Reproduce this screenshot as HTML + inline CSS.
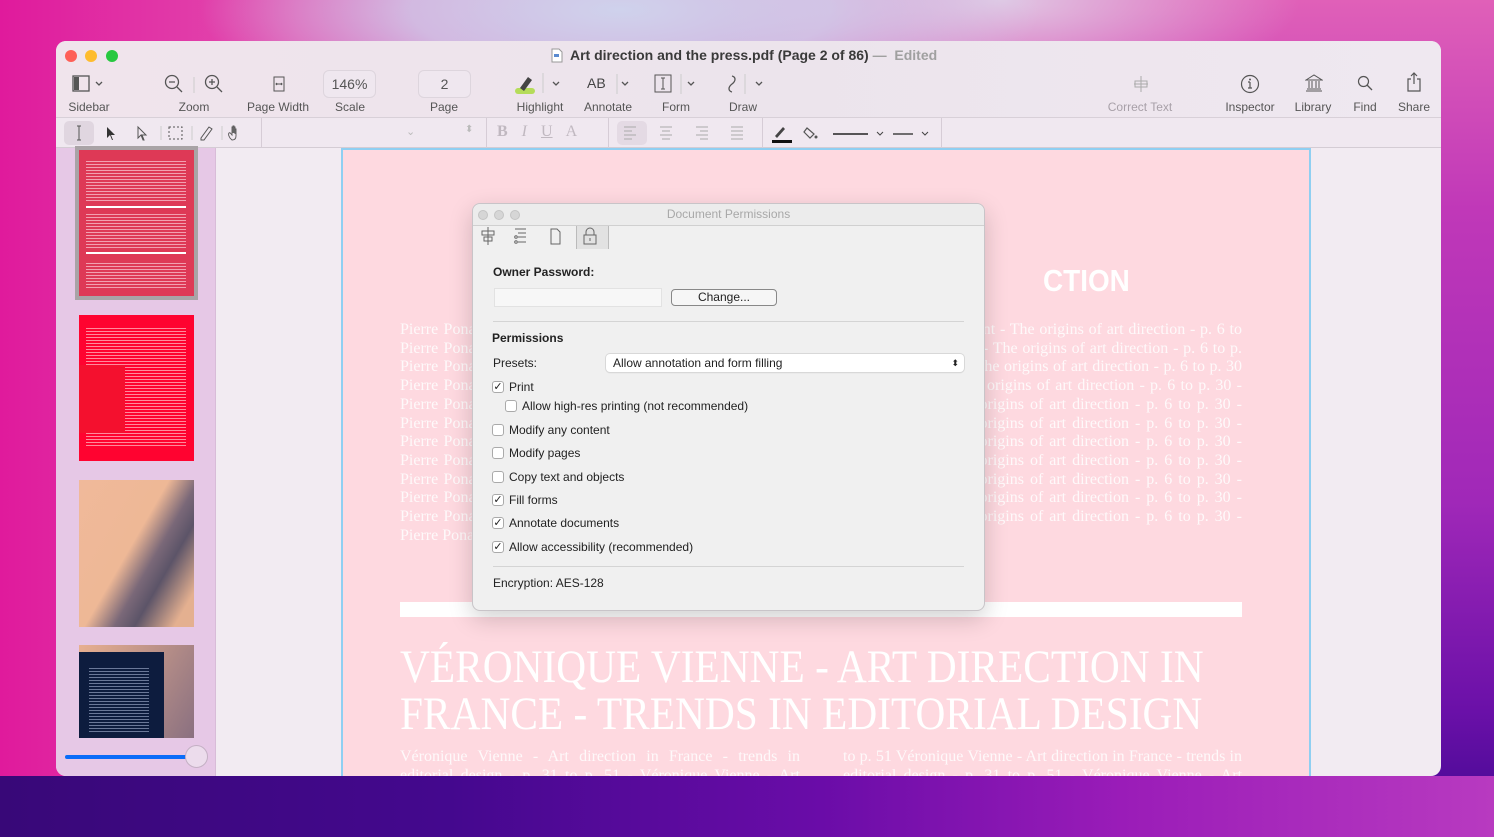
<!DOCTYPE html>
<html><head><meta charset="utf-8"><style>
*{margin:0;padding:0;box-sizing:border-box}
body{width:1494px;height:837px;overflow:hidden;position:relative;font-family:"Liberation Sans",sans-serif;
background:
radial-gradient(ellipse 420px 120px at 620px 10px,#cfd2ec 0%,rgba(207,210,236,.8) 50%,rgba(207,210,236,0) 100%),
radial-gradient(ellipse 300px 100px at 1000px 0px,#e0c8e4 0%,rgba(224,200,228,0) 100%),
linear-gradient(90deg,#e01a9c 0%,#e24eb0 20%,rgba(0,0,0,0) 35%),
linear-gradient(180deg,#e060b8 0%,#c038b8 25%,#a028b8 60%,#6a10a8 85%,#400890 100%);}
.bgbot{position:absolute;left:0;top:776px;width:1494px;height:61px;background:linear-gradient(90deg,#380878 0%,#44088e 30%,#6a0ca8 55%,#9a1cb8 75%,#b83ac0 100%)}
.win{position:absolute;left:56px;top:41px;width:1385px;height:735px;border-radius:10px;overflow:hidden;background:#f2ebf2}
.tb{position:absolute;left:0;top:0;width:1385px;height:77px;background:linear-gradient(90deg,#f0e4ec,#ece4ec 50%,#efe8f0);border-bottom:1px solid #d8d0d8}
.fb{position:absolute;left:0;top:77px;width:1385px;height:30px;background:#f0e8f0;border-bottom:1px solid #d4ccd4}
.dot{position:absolute;top:9px;width:12px;height:12px;border-radius:50%}
.title{position:absolute;top:6px;font-size:14px;font-weight:bold;color:#3a3a3a;white-space:nowrap}
.title span{color:#a0a0a0;font-weight:bold}
.lbl{position:absolute;top:59px;font-size:12px;color:#555;white-space:nowrap;transform:translateX(-50%)}
.ico{position:absolute}
.box{position:absolute;top:29px;height:28px;border:1px solid #ddd5dd;border-radius:6px;background:#efe7ef;font-size:14px;color:#555;text-align:center;line-height:26px}
.side{position:absolute;left:0;top:107px;width:160px;height:628px;background:#e6c8e6;border-right:1px solid #d8bcd8}
.page{position:absolute;left:285px;top:107px;width:970px;height:640px;background:#fed9e0;border:2px solid #8fcff2;overflow:hidden}
.ptxt{position:absolute;color:#fff;font-family:"Liberation Serif",serif;font-size:16px;line-height:18.7px;text-align:justify;opacity:.85;overflow:hidden}
.big{position:absolute;left:57px;color:#fff;font-family:"Liberation Serif",serif;font-size:47px;white-space:nowrap;transform-origin:left top;transform:scaleX(.88)}
.dlg{position:absolute;left:472px;top:203px;width:513px;height:408px;background:#f0f0f0;border:1px solid #c8c4c8;border-radius:8px;box-shadow:0 8px 24px rgba(0,0,0,.18);font-size:12px;color:#222}
.dlg .t{height:22px;border-bottom:1px solid #d0d0d0;background:#ececec;border-radius:8px 8px 0 0;text-align:center;line-height:21px;color:#a8a8a8;font-size:12px}
.dd{position:absolute;top:6px;width:10px;height:10px;border-radius:50%;background:#d6d6d6;border:1px solid #c4c4c4}
.cb{position:absolute;width:12px;height:12px;border:1px solid #aaa;border-radius:3px;background:#fff;font-size:11px;line-height:10px;text-align:center;color:#222}
.cl{position:absolute;font-size:12px;color:#222;white-space:nowrap}
</style></head><body>
<div class="bgbot"></div>
<div class="win">
 <div class="tb">
  <div class="dot" style="left:9px;background:#fe5f57"></div>
  <div class="dot" style="left:29px;background:#febc2e"></div>
  <div class="dot" style="left:50px;background:#28c840"></div>
  <svg class="ico" style="left:495px;top:7px" width="12" height="15"><path d="M1 1h7l3 3v10H1z" fill="#fff" stroke="#999"/><rect x="3" y="6" width="5" height="3" fill="#5a8ad0"/></svg>
  <div class="title" style="left:514px">Art direction and the press.pdf (Page 2 of 86) <span>—&nbsp; Edited</span></div>
  <svg class="ico" style="left:16px;top:34px" width="36" height="18"><rect x="1" y="1" width="16" height="15" fill="none" stroke="#555" stroke-width="1.3"/><rect x="2" y="2" width="5" height="13" fill="#555"/><path d="M24 7l3 3 3-3" fill="none" stroke="#555" stroke-width="1.3"/></svg>
  <div class="lbl" style="left:33px">Sidebar</div>
  <svg class="ico" style="left:108px;top:33px" width="70" height="22"><circle cx="8" cy="8" r="6.5" fill="none" stroke="#555" stroke-width="1.3"/><path d="M5 8h6M13 13l5 5" stroke="#555" stroke-width="1.3"/><path d="M30 3v16" stroke="#ccc"/><circle cx="48" cy="8" r="6.5" fill="none" stroke="#555" stroke-width="1.3"/><path d="M45 8h6M48 5v6M53 13l5 5" stroke="#555" stroke-width="1.3"/></svg>
  <div class="lbl" style="left:138px">Zoom</div>
  <svg class="ico" style="left:217px;top:35px" width="12" height="16"><rect x="1" y="1" width="10" height="14" fill="none" stroke="#555"/><path d="M3 8h6M4 7l-1 1 1 1M8 7l1 1-1 1" stroke="#555" fill="none"/></svg>
  <div class="lbl" style="left:222px">Page Width</div>
  <div class="box" style="left:267px;width:53px">146%</div>
  <div class="lbl" style="left:294px">Scale</div>
  <div class="box" style="left:362px;width:53px">2</div>
  <div class="lbl" style="left:388px">Page</div>
  <svg class="ico" style="left:459px;top:32px" width="52" height="22"><rect x="0" y="15" width="20" height="6" rx="3" fill="#b5dc5a"/><path d="M5 15l8-11 4 3-8 11z" fill="#444"/><path d="M28 0v20" stroke="#ccc"/><path d="M38 9l3 3 3-3" fill="none" stroke="#555" stroke-width="1.3"/></svg>
  <div class="lbl" style="left:484px">Highlight</div>
  <div class="ico" style="left:531px;top:34px;font-size:14px;color:#444">AB</div>
  <svg class="ico" style="left:560px;top:33px" width="20" height="20"><path d="M1 0v20" stroke="#ccc"/><path d="M6 8l3 3 3-3" fill="none" stroke="#555" stroke-width="1.3"/></svg>
  <div class="lbl" style="left:552px">Annotate</div>
  <svg class="ico" style="left:598px;top:33px" width="45" height="20"><rect x="1" y="1" width="16" height="17" fill="none" stroke="#555"/><path d="M9 4v11M7 4h4M7 15h4" stroke="#555"/><path d="M27 0v20" stroke="#ccc"/><path d="M34 8l3 3 3-3" fill="none" stroke="#555" stroke-width="1.3"/></svg>
  <div class="lbl" style="left:620px">Form</div>
  <svg class="ico" style="left:666px;top:33px" width="45" height="20"><path d="M10 2c4 1 4 5 0 8s-4 7 0 8" fill="none" stroke="#555" stroke-width="1.3"/><path d="M23 0v20" stroke="#ccc"/><path d="M34 8l3 3 3-3" fill="none" stroke="#555" stroke-width="1.3"/></svg>
  <div class="lbl" style="left:687px">Draw</div>
  <svg class="ico" style="left:1075px;top:35px" width="20" height="16"><path d="M10 0v16M3 8h14" stroke="#aaa"/><rect x="4" y="5" width="12" height="6" fill="none" stroke="#aaa"/></svg>
  <div class="lbl" style="left:1084px;color:#a8a0a8">Correct Text</div>
  <svg class="ico" style="left:1184px;top:33px" width="20" height="20"><circle cx="10" cy="10" r="8.5" fill="none" stroke="#555" stroke-width="1.2"/><path d="M10 8v6M8 14h4M8 8h2" stroke="#555" stroke-width="1.2"/><circle cx="10" cy="5.5" r="1" fill="#555"/></svg>
  <div class="lbl" style="left:1194px">Inspector</div>
  <svg class="ico" style="left:1249px;top:33px" width="18" height="18"><path d="M1 6l8-5 8 5zM1 17h16M2 15h14" fill="none" stroke="#555"/><path d="M4 7v7M7 7v7M11 7v7M14 7v7" stroke="#555"/></svg>
  <div class="lbl" style="left:1257px">Library</div>
  <svg class="ico" style="left:1301px;top:34px" width="16" height="16"><circle cx="6.5" cy="6.5" r="5" fill="none" stroke="#555" stroke-width="1.2"/><path d="M10 10l5 5" stroke="#555" stroke-width="1.3"/></svg>
  <div class="lbl" style="left:1309px">Find</div>
  <svg class="ico" style="left:1351px;top:31px" width="14" height="20"><path d="M4 7H1v12h12V7h-3M7 1v11M4 4l3-3 3 3" fill="none" stroke="#555" stroke-width="1.2"/></svg>
  <div class="lbl" style="left:1358px">Share</div>
 </div>
 <div class="fb">
  <div style="position:absolute;left:8px;top:3px;width:30px;height:24px;background:#e0d6e0;border-radius:5px"></div>
  <svg class="ico" style="left:8px;top:5px" width="200" height="20"><path d="M15 3v14M13 3h4M13 17h4" stroke="#555"/><path d="M43 4l8 8-4 0 2 5-1 0-2-5-3 3z" fill="#333"/><path d="M74 4l8 8-4 0 2 5-1 0-2-5-3 3z" fill="none" stroke="#555"/><path d="M97 3v14" stroke="#ccc"/><rect x="105" y="4" width="13" height="12" fill="none" stroke="#555" stroke-dasharray="2 2"/><path d="M128 3v14" stroke="#ccc"/><path d="M137 15l8-11 3 2-8 11-3 0z" fill="none" stroke="#555"/><path d="M158 3v14" stroke="#ccc"/><path d="M168 17c-3-2-4-6-3-7s2 1 3 2V4h1v6V3h1v7V4h1v7V6h1v7c0 3-2 4-4 4z" fill="none" stroke="#555" stroke-width=".9"/></svg>
  <div style="position:absolute;left:205px;top:0;width:1px;height:30px;background:#d6ccd6"></div>
  <div style="position:absolute;left:350px;top:7px;color:#bbb;font-size:11px">⌄</div>
  <div style="position:absolute;left:409px;top:6px;color:#bbb;font-size:10px">⬍</div>
  <div style="position:absolute;left:430px;top:0;width:1px;height:30px;background:#d6ccd6"></div>
  <div style="position:absolute;left:441px;top:5px;font-family:'Liberation Serif',serif;font-size:16px;color:#c0b8c0;white-space:nowrap;word-spacing:10px"><b>B</b> <i>I</i> <u>U</u> A</div>
  <div style="position:absolute;left:552px;top:0;width:1px;height:30px;background:#d6ccd6"></div>
  <div style="position:absolute;left:561px;top:3px;width:30px;height:24px;background:#e4dae4;border-radius:5px"></div>
  <svg class="ico" style="left:568px;top:8px" width="120" height="14"><g stroke="#aaa"><path d="M0 1h12M0 5h8M0 9h12M0 13h8"/><path d="M36 1h12M38 5h8M36 9h12M38 13h8"/><path d="M72 1h12M76 5h8M72 9h12M76 13h8"/><path d="M107 1h12M107 5h12M107 9h12M107 13h12"/></g></svg>
  <div style="position:absolute;left:706px;top:0;width:1px;height:30px;background:#d6ccd6"></div>
  <svg class="ico" style="left:715px;top:5px" width="160" height="22"><path d="M4 13l8-9 2 2-8 9z" fill="#444"/><rect x="1" y="17" width="20" height="3" fill="#111"/><path d="M36 5l7 6-4 4-6-6z" fill="none" stroke="#555" stroke-width="1.2"/><circle cx="45" cy="14" r="1.5" fill="#555"/><path d="M62 11h35" stroke="#222" stroke-width="1.5"/><path d="M106 9l3 3 3-3" fill="none" stroke="#444"/><path d="M122 11h20" stroke="#444" stroke-width="1.5"/><path d="M151 9l3 3 3-3" fill="none" stroke="#444"/></svg>
  <div style="position:absolute;left:885px;top:0;width:1px;height:30px;background:#d6ccd6"></div>
 </div>
 <div class="side">
  <div style="position:absolute;left:19px;top:-2px;width:123px;height:154px;background:#a9a3a6"></div>
  <div style="position:absolute;left:23px;top:2px;width:115px;height:146px;background:#de3956"></div>
  <div style="position:absolute;left:30px;top:13px;width:100px;height:42px;background:repeating-linear-gradient(180deg,#f2a0b0 0 1px,transparent 1px 3px)"></div>
  <div style="position:absolute;left:30px;top:58px;width:100px;height:2px;background:#fff"></div>
  <div style="position:absolute;left:30px;top:66px;width:100px;height:36px;background:repeating-linear-gradient(180deg,#f2a0b0 0 1px,transparent 1px 3px)"></div>
  <div style="position:absolute;left:30px;top:104px;width:100px;height:2px;background:#fff"></div>
  <div style="position:absolute;left:30px;top:115px;width:100px;height:26px;background:repeating-linear-gradient(180deg,#f2a0b0 0 1px,transparent 1px 3px)"></div>
  <div style="position:absolute;left:23px;top:167px;width:115px;height:146px;background:#ff0330"></div>
  <div style="position:absolute;left:30px;top:180px;width:100px;height:120px;background:repeating-linear-gradient(180deg,#ff8a9c 0 1px,transparent 1px 3px)"></div>
  <div style="position:absolute;left:23px;top:217px;width:46px;height:68px;background:#f4102e"></div>
  <div style="position:absolute;left:23px;top:332px;width:115px;height:147px;background:linear-gradient(120deg,#f0b99a 0%,#eeb896 45%,#7a6878 60%,#5c5468 70%,#e4b090 90%)"></div>
  <div style="position:absolute;left:23px;top:497px;width:115px;height:93px;background:linear-gradient(120deg,#e8b090,#8a7080)"></div>
  <div style="position:absolute;left:23px;top:504px;width:85px;height:86px;background:#0d1c3e"></div>
  <div style="position:absolute;left:33px;top:520px;width:60px;height:65px;background:repeating-linear-gradient(180deg,#6a7898 0 1px,transparent 1px 3px)"></div>
  <div style="position:absolute;left:9px;top:607px;width:124px;height:4px;background:#0a6cf8;border-radius:2px"></div>
  <div style="position:absolute;left:129px;top:597px;width:23px;height:23px;border-radius:50%;background:#ecdcec;border:1px solid #c4b0c4"></div>
 </div>
 <div class="page">
  <div style="position:absolute;left:700px;top:113px;color:#fff;font-size:31px;font-weight:bold;transform:scaleX(.9);transform-origin:left">CTION</div>
  <div class="ptxt" style="left:57px;top:171px;width:390px;height:262px">Pierre Ponant - The origins of art direction - p. 6 to p. 30 - Pierre Ponant - The origins of art direction - p. 6 to p. 30 - Pierre Ponant - The origins of art direction - p. 6 to p. 30 - Pierre Ponant - The origins of art direction - p. 6 to p. 30 - Pierre Ponant - The origins of art direction - p. 6 to p. 30 - Pierre Ponant - The origins of art direction - p. 6 to p. 30 - Pierre Ponant - The origins of art direction - p. 6 to p. 30 - Pierre Ponant - The origins of art direction - p. 6 to p. 30 - Pierre Ponant - The origins of art direction - p. 6 to p. 30 - Pierre Ponant - The origins of art direction - p. 6 to p. 30 - Pierre Ponant - The origins of art direction - p. 6 to p. 30 - Pierre Ponant - The origins of art direction</div>
  <div class="ptxt" style="left:500px;top:171px;width:399px;height:262px">to p. 30 - Pierre Ponant - The origins of art direction - p. 6 to p. 30 - Pierre Ponant - The origins of art direction - p. 6 to p. 30 - Pierre Ponant - The origins of art direction - p. 6 to p. 30 - Pierre Ponant - The origins of art direction - p. 6 to p. 30 - Pierre Ponant - The origins of art direction - p. 6 to p. 30 - Pierre Ponant - The origins of art direction - p. 6 to p. 30 - Pierre Ponant - The origins of art direction - p. 6 to p. 30 - Pierre Ponant - The origins of art direction - p. 6 to p. 30 - Pierre Ponant - The origins of art direction - p. 6 to p. 30 - Pierre Ponant - The origins of art direction - p. 6 to p. 30 - Pierre Ponant - The origins of art direction - p. 6 to p. 30 - Pierre Ponant</div>
  <div style="position:absolute;left:57px;top:452px;width:842px;height:15px;background:#fff"></div>
  <div class="big" style="top:490px">VÉRONIQUE VIENNE - ART DIRECTION IN</div>
  <div class="big" style="top:537px">FRANCE - TRENDS IN EDITORIAL DESIGN</div>
  <div class="ptxt" style="left:57px;top:598px;width:400px;height:40px">Véronique Vienne - Art direction in France - trends in editorial design - p. 31 to p. 51 - Véronique Vienne - Art direction in</div>
  <div class="ptxt" style="left:500px;top:598px;width:399px;height:40px">to p. 51 Véronique Vienne - Art direction in France - trends in editorial design - p. 31 to p. 51 - Véronique Vienne - Art direction</div>
 </div>
</div>
<div class="dlg">
 <div class="t">Document Permissions</div>
 <div class="dd" style="left:5px"></div><div class="dd" style="left:21px"></div><div class="dd" style="left:37px"></div>
 <div style="position:absolute;left:103px;top:22px;width:33px;height:23px;background:#e2e2e2;border-left:1px solid #bbb;border-right:1px solid #bbb"></div>
 <svg style="position:absolute;left:8px;top:23px" width="125" height="20"><g fill="none" stroke="#666"><path d="M7 0v18M1 4h12v4H1zM3 10h8v4H3z"/><path d="M34 2h11M37 6h8M37 10h8M37 15h8"/><circle cx="35" cy="10" r="1.3"/><circle cx="35" cy="15" r="1.3"/><path d="M70 2h6l3 3v12h-9z"/><rect x="103" y="8" width="12" height="9"/><path d="M105 8V5a4 4 0 0 1 8 0v3M109 11v3"/></g></svg>
 <div class="cl" style="left:20px;top:61px;font-weight:bold">Owner Password:</div>
 <div style="position:absolute;left:21px;top:84px;width:168px;height:19px;background:#f7f7f7;border:1px solid #e2e2e2"></div>
 <div style="position:absolute;left:198px;top:85px;width:106px;height:17px;border:1px solid #888;border-radius:4px;background:#f6f6f6;text-align:center;line-height:15px;font-size:12px">Change...</div>
 <div style="position:absolute;left:20px;top:117px;width:471px;height:1px;background:#d4d4d4"></div>
 <div class="cl" style="left:19px;top:127px;font-weight:bold">Permissions</div>
 <div class="cl" style="left:20px;top:152px">Presets:</div>
 <div style="position:absolute;left:133px;top:150px;width:358px;height:18px;background:#fff;border-radius:4px;box-shadow:0 0 0 1px #d8d8d8,0 1px 1px rgba(0,0,0,.15);font-size:12px;line-height:18px;padding-left:7px">Allow annotation and form filling<span style="position:absolute;right:5px;font-size:9px">⬍</span></div>
 <div class="cb" style="left:19px;top:177px">✓</div><div class="cl" style="left:36px;top:176px">Print</div>
 <div class="cb" style="left:32px;top:196px"></div><div class="cl" style="left:49px;top:195px">Allow high-res printing (not recommended)</div>
 <div class="cb" style="left:19px;top:220px"></div><div class="cl" style="left:36px;top:219px">Modify any content</div>
 <div class="cb" style="left:19px;top:243px"></div><div class="cl" style="left:36px;top:242px">Modify pages</div>
 <div class="cb" style="left:19px;top:267px"></div><div class="cl" style="left:36px;top:266px">Copy text and objects</div>
 <div class="cb" style="left:19px;top:290px">✓</div><div class="cl" style="left:36px;top:289px">Fill forms</div>
 <div class="cb" style="left:19px;top:313px">✓</div><div class="cl" style="left:36px;top:312px">Annotate documents</div>
 <div class="cb" style="left:19px;top:337px">✓</div><div class="cl" style="left:36px;top:336px">Allow accessibility (recommended)</div>
 <div style="position:absolute;left:20px;top:362px;width:471px;height:1px;background:#d4d4d4"></div>
 <div class="cl" style="left:20px;top:372px">Encryption: AES-128</div>
</div>
</body></html>
